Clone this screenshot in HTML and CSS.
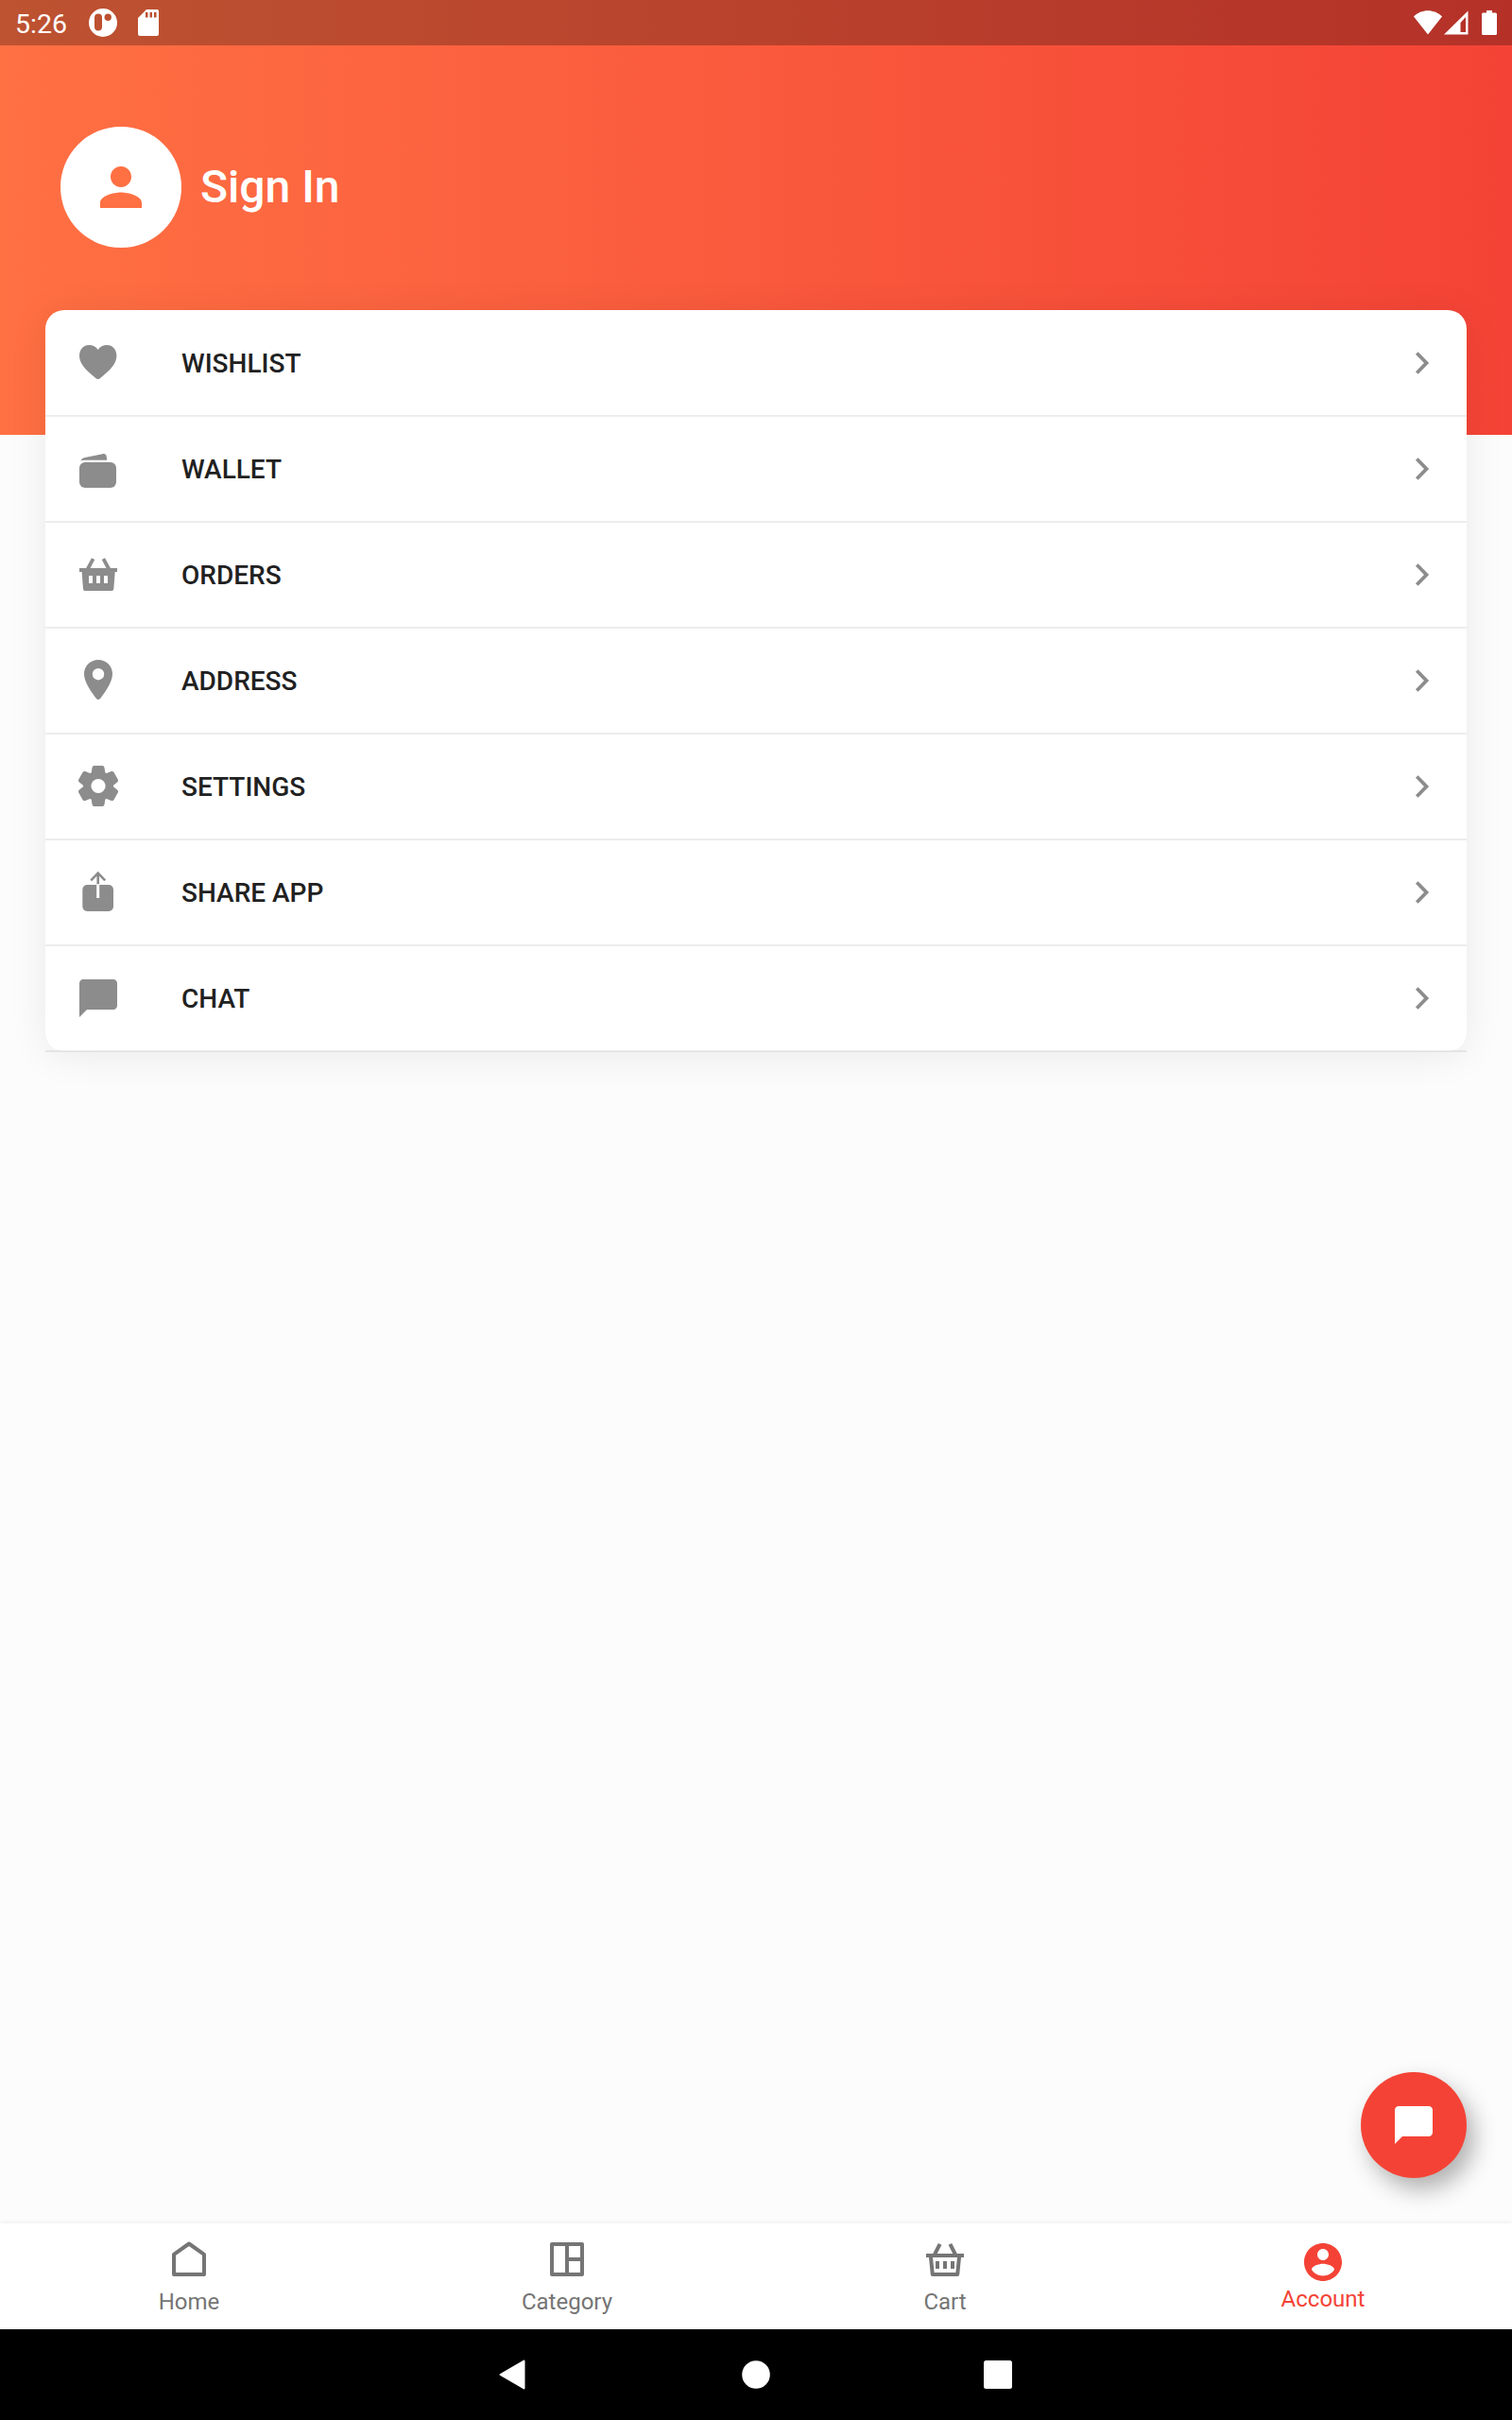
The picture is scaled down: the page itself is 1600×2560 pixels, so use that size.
FILE: index.html
```
<!DOCTYPE html>
<html lang="en">
  <head>
    <meta charset="UTF-8" />
    <meta name="viewport" content="width=device-width, initial-scale=1.0" />
    <title>Account</title>
    <link rel="stylesheet" href="styles.css">
  </head>
  <body>
    <header class="header">
      <div class="status-bar">
        <time class="clock">5:26</time>
        <svg class="status-app" width="30" height="30" viewBox="0 0 30 30">
          <path fill-rule="evenodd" d="M15 0a15 15 0 1 0 0 30 15 15 0 0 0 0-30zM10 5.500a4 4 0 0 1 4 4v10a4 4 0 0 1-8 0v-10a4 4 0 0 1 4-4zM20.200 5.500a3.700 3.700 0 1 1 0 7.400 c-1.500 0-3.700-.5-3.700-3.700 0-2 1.500-3.700 3.700-3.700z" />
        </svg>
        <svg class="status-sd" width="22" height="28" viewBox="0 0 22 28">
          <path fill-rule="evenodd" d="M9 0h11a2 2 0 0 1 2 2v24a2 2 0 0 1-2 2H2a2 2 0 0 1-2-2V9zM8 3v5.500h2.500V3zM12.500 3v5.500H15V3zM17 3v5.500h2.500V3z" />
        </svg>
        <div class="status-right">
          <svg width="30" height="26" viewBox="0 0 30 26">
            <path d="M15 25.500L0 6.500C4 2.500 9.500.3 15 .3s11 2.200 15 6.200z" />
          </svg>
          <svg class="signal" width="26" height="26" viewBox="0 0 26 26">
            <path fill-rule="evenodd" d="M25.500.5v25H0zM23 7l-5.500 6v10H23z" />
          </svg>
          <svg class="battery" width="16" height="26" viewBox="0 0 16 26">
            <path d="M5 0h6v2.500h3.500A1.500 1.500 0 0 1 16 4v20.500a1.500 1.500 0 0 1-1.500 1.500h-13A1.500 1.500 0 0 1 0 24.500V4a1.500 1.500 0 0 1 1.500-1.500H5z" />
          </svg>
        </div>
      </div>
      <div class="profile">
        <div class="avatar">
          <svg width="66" height="66" viewBox="0 0 24 24">
            <path d="M12 12c2.210 0 4-1.790 4-4s-1.790-4-4-4-4 1.790-4 4 1.790 4 4 4zm0 2c-2.670 0-8 1.340-8 4v2h16v-2c0-2.660-5.330-4-8-4z" />
          </svg>
        </div>
        <h1>Sign In</h1>
      </div>
    </header>
    <main>
      <ul class="menu">
        <li>
          <svg class="icon" viewBox="0 0 48 48">
            <path d="M23.700 41c-.9 0-1.600-.5-3-1.600C9.800 31 4 24 4 16.300 4 9.800 8.400 5 14.200 5c4 0 7.300 1.800 9.500 5 2.200-3.200 5.500-5 9.500-5 5.800 0 10.200 4.800 10.200 11.300 0 7.700-5.800 14.700-16.700 23.100-1.400 1.100-2.100 1.600-3 1.600z" />
          </svg>
          <span>WISHLIST</span>
          <svg class="chevron" viewBox="0 0 24 24"><path d="M6.300 1.500L16.500 12 6.300 22.500" /></svg>
        </li>
        <li>
          <svg class="icon" viewBox="0 0 48 48">
            <rect x="4" y="17" width="39" height="27" rx="6" />
            <path d="M5.500 15.500c.6-1.800 2.200-2.900 4.500-3.400L28.500 8.200c2.600-.5 4 .7 4.300 3l.4 3.600H9c-1.300 0-2.500.2-3.500.7z" />
          </svg>
          <span>WALLET</span>
          <svg class="chevron" viewBox="0 0 24 24"><path d="M6.300 1.500L16.500 12 6.300 22.500" /></svg>
        </li>
        <li>
          <svg class="icon" viewBox="0 0 48 48">
            <path fill-rule="evenodd" d="M4 17h40v4h-2.300l-1.400 18.200a2 2 0 0 1-2 1.800H10a2 2 0 0 1-2-1.800L6.600 21H4zM14 25v8h4v-8zM22 25v8h4v-8zM30 25v8h4v-8z" />
            <path class="line" d="M12.500 18.500L18.600 7.200M35.500 18.500L29.400 7.200" />
          </svg>
          <span>ORDERS</span>
          <svg class="chevron" viewBox="0 0 24 24"><path d="M6.300 1.500L16.500 12 6.300 22.500" /></svg>
        </li>
        <li>
          <svg class="icon" viewBox="0 0 48 48">
            <path fill-rule="evenodd" d="M24 2C15.700 2 9 8.500 9 16.800c0 7.500 5.800 17 12.700 25.900 1.500 1.800 3.100 1.800 4.600 0C33.200 33.800 39 24.300 39 16.800 39 8.500 32.300 2 24 2zm0 9a6.200 6.200 0 1 1 0 12.400 6.200 6.200 0 0 1 0-12.400z" />
          </svg>
          <span>ADDRESS</span>
          <svg class="chevron" viewBox="0 0 24 24"><path d="M6.300 1.500L16.500 12 6.300 22.500" /></svg>
        </li>
        <li>
          <svg class="icon" viewBox="0 0 48 48">
            <defs>
              <path id="tooth" d="M14.800 13.500L16.800 8.500 17.500 4Q18 2 19.500 2H28.500Q30 2 30.500 4L31.200 8.500 33.200 13.500z" />
            </defs>
            <use href="#tooth" />
            <use href="#tooth" transform="rotate(60 24 23.500)" />
            <use href="#tooth" transform="rotate(120 24 23.500)" />
            <use href="#tooth" transform="rotate(180 24 23.500)" />
            <use href="#tooth" transform="rotate(240 24 23.500)" />
            <use href="#tooth" transform="rotate(300 24 23.500)" />
            <circle cx="24" cy="23.500" r="15.500" />
            <circle class="hole" cx="24" cy="23.500" r="7.600" />
          </svg>
          <span>SETTINGS</span>
          <svg class="chevron" viewBox="0 0 24 24"><path d="M6.300 1.500L16.500 12 6.300 22.500" /></svg>
        </li>
        <li>
          <svg class="icon" viewBox="0 0 48 48">
            <rect x="7.300" y="16" width="32.700" height="28" rx="5" />
            <path class="arrow" d="M23.700 15.500V4M16.200 11.300L23.700 3.700l7.500 7.600" />
            <path class="slit" d="M23.700 15.500V30" />
          </svg>
          <span>SHARE APP</span>
          <svg class="chevron" viewBox="0 0 24 24"><path d="M6.300 1.500L16.500 12 6.300 22.500" /></svg>
        </li>
        <li>
          <svg class="icon" viewBox="0 0 24 24">
            <path d="M20 2H4c-1.100 0-1.990.9-1.990 2L2 22l4-4h14c1.100 0 2-.9 2-2V4c0-1.100-.9-2-2-2z" />
          </svg>
          <span>CHAT</span>
          <svg class="chevron" viewBox="0 0 24 24"><path d="M6.300 1.500L16.500 12 6.300 22.500" /></svg>
        </li>
      </ul>
      <button class="fab" aria-label="Chat">
        <svg width="48" height="48" viewBox="0 0 24 24">
          <path d="M20 2H4c-1.100 0-2 .9-2 2v18l4-4h14c1.100 0 2-.9 2-2V4c0-1.100-.9-2-2-2z" />
        </svg>
      </button>
    </main>
    <nav class="tabs">
      <a class="tab">
        <svg viewBox="0 0 48 48">
          <path class="outline" d="M8 40V18.800L24 7.500l16 11.300V40z" />
        </svg>
        Home
      </a>
      <a class="tab">
        <svg viewBox="0 0 48 48">
          <path class="outline" d="M8 8h32v32H8zM24 8v32M24 24h16" />
        </svg>
        Category
      </a>
      <a class="tab">
        <svg viewBox="0 0 48 48">
          <path class="outline" d="M8.800 20l2 20h26.400l2-20M4 20h40M13 19l5.600-11.200M35 19L29.400 7.800" />
          <path d="M14 26h4v8h-4zM22 26h4v8h-4zM30 26h4v8h-4z" />
        </svg>
        Cart
      </a>
      <a class="tab active">
        <svg viewBox="0 0 24 24">
          <path d="M12 2C6.480 2 2 6.480 2 12s4.480 10 10 10 10-4.480 10-10S17.520 2 12 2zm0 3c1.660 0 3 1.340 3 3s-1.340 3-3 3-3-1.340-3-3 1.340-3 3-3zm0 14.200c-2.500 0-4.710-1.280-6-3.220.03-1.990 4-3.080 6-3.080 1.990 0 5.970 1.090 6 3.080-1.290 1.940-3.500 3.220-6 3.220z" />
        </svg>
        Account
      </a>
    </nav>
    <footer class="system-nav">
      <svg width="32" height="32" viewBox="0 0 32 32"><path class="back" d="M1.500 16L26.500 1.500v29z" /></svg>
      <svg width="32" height="32" viewBox="0 0 32 32"><circle cx="16" cy="16" r="14.800" /></svg>
      <svg width="32" height="32" viewBox="0 0 32 32"><rect x="1" y="1" width="30" height="30" rx="2.500" /></svg>
    </footer>
  </body>
</html>
```

FILE: styles.css
```
* {
  box-sizing: border-box;
  margin: 0;
  padding: 0;
}

body {
  height: 2560px;
  display: flex;
  flex-direction: column;
  background: #fcfcfc;
  font-family: Roboto, sans-serif;
  color: #212121;
}

svg {
  display: block;
  flex: none;
  fill: currentColor;
}

/* header */
.header {
  height: 460px;
  flex: none;
  background: linear-gradient(to right, #ff7043, #f44336);
  color: #fff;
}

.status-bar {
  height: 48px;
  display: flex;
  align-items: center;
  padding: 0 16px;
  background: rgba(0, 0, 0, 0.26);
}

.clock {
  width: 78px;
  font-size: 28.5px;
  line-height: 48px;
  padding-top: 3px;
}

.status-sd {
  margin-left: 22px;
}

.status-right {
  display: flex;
  align-items: center;
  margin-left: auto;
}

.signal {
  margin-left: 2px;
}

.battery {
  margin-left: 14px;
}

.profile {
  display: flex;
  align-items: center;
  gap: 20px;
  padding: 86px 64px 0;
}

.avatar {
  width: 128px;
  height: 128px;
  display: flex;
  align-items: center;
  justify-content: center;
  border-radius: 50%;
  background: #fff;
  color: #ff7043;
}

h1 {
  font-size: 48px;
  font-weight: 500;
  padding-bottom: 2px;
}

/* account menu, pulled up over the header */
main {
  flex: 1;
  display: flex;
  flex-direction: column;
  justify-content: space-between;
  padding: 0 48px 48px;
}

.menu {
  height: 784px;
  margin-top: -132px;
  list-style: none;
  background: #fff;
  border-radius: 20px;
  box-shadow: 0 4px 40px rgba(0, 0, 0, 0.08);
}

.menu li {
  height: 112px;
  display: flex;
  align-items: center;
  padding: 0 32px;
  border-bottom: 2px solid rgba(0, 0, 0, 0.07);
  font-size: 28px;
  font-weight: 500;
}

.menu li:first-child {
  height: 113px;
  padding-top: 1px;
}

.icon {
  width: 48px;
  height: 48px;
  margin-right: 64px;
  color: #8c8c8c;
}

.icon .line,
.icon .arrow {
  fill: none;
  stroke: currentColor;
  stroke-width: 3.8;
}

.icon .arrow {
  stroke-width: 2.6;
}

.icon .slit {
  stroke: #fff;
  stroke-width: 3;
}

.icon .hole {
  fill: #fff;
}

.chevron {
  width: 24px;
  height: 24px;
  margin-left: auto;
  margin-right: 3px;
  fill: none;
  stroke: #8c8c8c;
  stroke-width: 3.8;
}

.fab {
  width: 112px;
  height: 112px;
  align-self: flex-end;
  display: flex;
  align-items: center;
  justify-content: center;
  border: 0;
  border-radius: 50%;
  background: #f44336;
  color: #fff;
  box-shadow: 8px 12px 24px rgba(0, 0, 0, 0.3);
}

/* bottom tabs */
.tabs {
  height: 112px;
  display: flex;
  background: #fff;
  color: #757575;
  box-shadow: 0 -1px 4px rgba(0, 0, 0, 0.06);
}

.tab {
  flex: 1;
  display: flex;
  flex-direction: column;
  align-items: center;
  padding-top: 14px;
  font-size: 24px;
  line-height: 28px;
}

.tab svg {
  width: 48px;
  height: 48px;
  margin-bottom: 7px;
}

.tab .outline {
  fill: none;
  stroke: currentColor;
  stroke-width: 4;
  stroke-linejoin: round;
}

.tab.active {
  padding-top: 17px;
  color: #f44336;
}

.tab.active svg {
  margin-bottom: 1px;
}

.system-nav {
  height: 96px;
  display: flex;
  align-items: center;
  justify-content: center;
  gap: 224px;
  background: #000;
  color: #fff;
}

.system-nav .back {
  stroke: currentColor;
  stroke-width: 2;
  stroke-linejoin: round;
}
```
